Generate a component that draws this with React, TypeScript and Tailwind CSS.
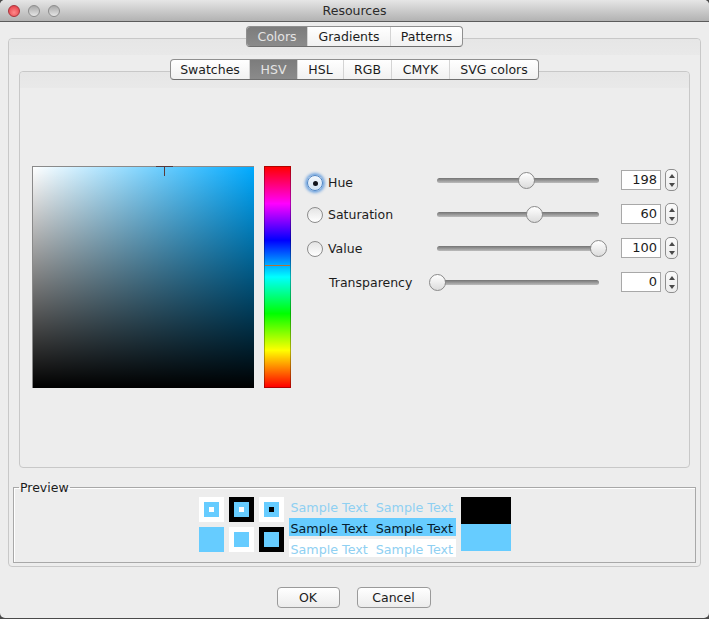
const tabBase =
  "flex h-full items-center justify-center border-r border-[#d4d4d4] pt-[1px] last:border-r-0";

function Segments({ items }: { items: { label: string; w: number; active?: boolean }[] }) {
  return (
    <div className="relative z-10 flex h-[21px] justify-center">
      <div className="flex overflow-hidden rounded-[4px] border border-[#8f8f8f] border-b-[#6f6f6f] bg-gradient-to-b from-white to-[#f1f1f1]">
        {items.map((t) => (
          <div
            key={t.label}
            style={{ width: t.w }}
            className={
              t.active
                ? tabBase + " bg-gradient-to-b from-[#7c7c7c] to-[#8b8b8b] text-[#e4e4e4]"
                : tabBase + " text-[#1c1c1c]"
            }
          >
            {t.label}
          </div>
        ))}
      </div>
    </div>
  );
}

function Band() {
  return <div className="h-[16px] rounded-t-[4px] bg-gradient-to-b from-[#e6e6e6] to-[#e9e9e9]" />;
}

function Radio({ checked }: { checked?: boolean }) {
  if (checked) {
    return (
      <div className="flex h-[16px] w-[16px] items-center justify-center rounded-full border border-[#4f86c6] bg-gradient-to-b from-[#f4f8fc] to-[#cfe2f5] shadow-[0_0_3px_2px_#6fa4e0]">
        <div className="h-[5px] w-[5px] rounded-full bg-[#10141c]" />
      </div>
    );
  }
  return (
    <div className="h-[16px] w-[16px] rounded-full border border-[#8c8c8c] bg-gradient-to-b from-[#e4e4e4] to-white" />
  );
}

function Slider({ pos, left = 437 }: { pos: number; left?: number }) {
  return (
    <div className="relative h-[5px] w-[162px] rounded-full bg-gradient-to-b from-[#747474] to-[#bcbcbc]">
      <div
        style={{ left: pos - left - 8 }}
        className="absolute top-[-6px] h-[17px] w-[17px] rounded-full border border-[#8a8a8a] bg-gradient-to-b from-white to-[#dcdcdc]"
      />
    </div>
  );
}

function Spinner() {
  return (
    <div className="flex h-[22px] w-[13px] flex-col items-center justify-center gap-[5px] rounded-[5px] border border-[#8f8f8f] bg-gradient-to-b from-[#fafafa] to-[#ececec]">
      <svg width="6" height="4" viewBox="0 0 6 4">
        <path d="M3 0 L6 4 L0 4 Z" fill="#4a4a4a" />
      </svg>
      <svg width="6" height="4" viewBox="0 0 6 4">
        <path d="M0 0 L6 0 L3 4 Z" fill="#4a4a4a" />
      </svg>
    </div>
  );
}

const rows = [
  { label: "Hue", value: 198, pos: 526, checked: true, radio: true, nudge: "mt-[6px]" },
  { label: "Saturation", value: 60, pos: 534, radio: true, nudge: "mt-[2px]" },
  { label: "Value", value: 100, pos: 598, radio: true, nudge: "mt-[2px]" },
  { label: "Transparency", value: 0, pos: 437, radio: false, nudge: "mt-[2px]" },
];

function Swatch({ outer, inner, dot }: { outer: string; inner?: boolean; dot?: string }) {
  return (
    <div className={"flex h-[25px] w-[25px] items-center justify-center " + outer}>
      {inner && (
        <div className="flex h-[15px] w-[15px] items-center justify-center bg-[#66ccff]">
          {dot && <div className={"h-[5px] w-[5px] " + dot} />}
        </div>
      )}
    </div>
  );
}

function SampleRow({ className }: { className: string }) {
  return (
    <div className={"flex h-[18px] items-center gap-[8px] px-[2px] pt-[3px] text-[12.7px] " + className}>
      <span>Sample Text</span>
      <span>Sample Text</span>
    </div>
  );
}

export default function App() {
  return (
    <div
      className="h-[619px] w-[709px] overflow-hidden bg-[#4a4a4a] text-[12.5px] text-[#1c1c1c]"
      style={{ fontFamily: '"DejaVu Sans", sans-serif' }}
    >
      <div className="flex h-[618px] flex-col overflow-hidden rounded-[5px] bg-[#ededed]">
        {/* title bar */}
        <div className="relative flex h-[22px] shrink-0 items-center justify-center border-b border-[#5c5c5c] bg-gradient-to-b from-[#e6e6e6] to-[#b2b2b2] pt-[2px] text-[#2a2a2a]">
          <div className="absolute left-[8px] top-[5px] flex gap-[8px]">
            <div className="h-[12px] w-[12px] rounded-full border border-[#a8323a] bg-[radial-gradient(circle_at_50%_65%,#ff8a8a,#e0323c)]" />
            <div className="h-[12px] w-[12px] rounded-full border border-[#8c8c8c] bg-gradient-to-b from-[#a8a8a8] to-[#e6e6e6]" />
            <div className="h-[12px] w-[12px] rounded-full border border-[#8c8c8c] bg-gradient-to-b from-[#a8a8a8] to-[#e6e6e6]" />
          </div>
          Resources
        </div>

        {/* outer tabs */}
        <div className="mt-[4px] px-[8px]">
          <Segments
            items={[
              { label: "Colors", w: 61, active: true },
              { label: "Gradients", w: 83 },
              { label: "Patterns", w: 71 },
            ]}
          />
          <div className="mt-[-9px] h-[529px] rounded-[4px] border border-[#c8c8c8]">
            <Band />
            <div className="mt-[4px] px-[10px]">
              <Segments
                items={[
                  { label: "Swatches", w: 79 },
                  { label: "HSV", w: 48, active: true },
                  { label: "HSL", w: 46 },
                  { label: "RGB", w: 48 },
                  { label: "CMYK", w: 58 },
                  { label: "SVG colors", w: 88 },
                ]}
              />
              <div className="mt-[-9px] flex h-[397px] flex-col rounded-[4px] border border-[#c8c8c8]">
                <Band />
                <div className="flex flex-1 items-start pl-[12px] pt-[78px]">
                  <div className="relative h-[222px] w-[222px] border-l border-t border-[#8a8a8a] bg-[linear-gradient(to_top,#000,transparent),linear-gradient(to_right,#fff,#00aaff)]">
                    <div className="absolute left-[123px] top-[-1px] h-px w-[17px] bg-[#5a3a3a]" />
                    <div className="absolute left-[131px] top-[-1px] h-[10px] w-px bg-[#5a3a3a]" />
                  </div>
                  <div className="relative ml-[10px] h-[222px] w-[27px] border border-black/30 bg-[linear-gradient(to_bottom,#f00,#f0f,#00f,#0ff,#0f0,#ff0,#f00)]">
                    <div className="absolute left-0 right-0 top-[98px] h-px bg-[#b07038]" />
                  </div>
                  <div className="ml-[16px] mt-[-3px] flex flex-col">
                    {rows.map((r) => (
                      <div key={r.label} className="flex h-[34px] items-center">
                        <div className={"flex w-[130px] items-center " + r.nudge}>
                          {r.radio ? (
                            <>
                              <Radio checked={r.checked} />
                              <span className="ml-[5px] pt-[1px]">{r.label}</span>
                            </>
                          ) : (
                            <span className="ml-[22px] pt-[1px]">{r.label}</span>
                          )}
                        </div>
                        <Slider pos={r.pos} />
                        <div className="ml-[22px] flex h-[20px] w-[40px] items-center justify-end border border-[#a8a8a8] bg-white pr-[3px] text-[13px]">
                          {r.value}
                        </div>
                        <div className="ml-[4px]">
                          <Spinner />
                        </div>
                      </div>
                    ))}
                  </div>
                </div>
              </div>

              {/* preview */}
              <fieldset className="mx-[-6px] mt-[11px] h-[84px] border border-[#a8a8a8] shadow-[inset_1px_1px_0_#fff]">
                <legend className="ml-[5px] px-[1px] pt-[2px] leading-[14px]">Preview</legend>
                <div className="mt-[2px] flex justify-center gap-[5px]">
                  <div className="grid grid-cols-[25px_25px_25px] content-start gap-[5px]">
                    <Swatch outer="bg-white" inner dot="bg-white" />
                    <Swatch outer="bg-black" inner dot="bg-white" />
                    <Swatch outer="bg-white" inner dot="bg-black" />
                    <Swatch outer="bg-[#66ccff]" />
                    <Swatch outer="bg-white" inner />
                    <Swatch outer="bg-black" inner />
                  </div>
                  <div className="flex w-[167px] flex-col gap-[3px] whitespace-nowrap">
                    <SampleRow className="text-[#8fd0f2]" />
                    <SampleRow className="bg-[#66ccff] text-[#06202e]" />
                    <SampleRow className="bg-white text-[#8fd0f2]" />
                  </div>
                  <div className="flex w-[50px] flex-col">
                    <div className="h-[27px] bg-black" />
                    <div className="h-[27px] bg-[#66ccff]" />
                  </div>
                </div>
              </fieldset>
            </div>
          </div>
        </div>

        {/* buttons */}
        <div className="mt-[20px] flex justify-center gap-[17px] pr-[2px]">
          <div className="flex h-[21px] w-[63px] items-center justify-center rounded-[4px] border border-[#9a9a9a] bg-gradient-to-b from-white to-[#ececec] pt-[1px]">
            OK
          </div>
          <div className="flex h-[21px] w-[74px] items-center justify-center rounded-[4px] border border-[#9a9a9a] bg-gradient-to-b from-white to-[#ececec] pt-[1px]">
            Cancel
          </div>
        </div>
      </div>
    </div>
  );
}
